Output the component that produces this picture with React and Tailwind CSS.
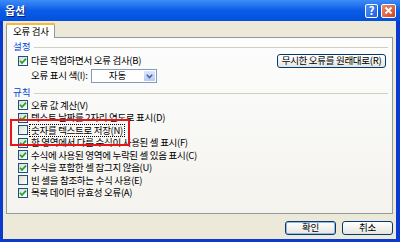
import React from "react";

const font = { fontFamily: '"Noto Sans CJK KR", "Noto Sans", sans-serif' };

function Check({ on }) {
  return (
    <span className="w-[10px] h-[10px] border border-[#1c5180] bg-linear-to-br from-[#dcdcd5] to-white flex items-center justify-center shrink-0">
      {on && (
        <svg width="8" height="8" viewBox="0 0 8 8">
          <path d="M1 3.8 L3 6 L7 1.6" stroke="#21a121" strokeWidth="1.7" fill="none" />
        </svg>
      )}
    </span>
  );
}

function Header({ children }) {
  return (
    <div className="flex items-center h-[12px] pl-[6px] pr-[4px]">
      <span className="text-[#0046d5] text-[9.5px] leading-none">{children}</span>
      <span className="flex-1 h-px bg-[#d0d0bf] ml-[4px]" />
    </div>
  );
}

function Rule({ on, children, focus }) {
  return (
    <div className="flex items-center h-[12.5px] pl-[11px] gap-[2px]">
      <Check on={on} />
      <span
        className={
          "text-[9.5px] leading-none tracking-[-0.3px] text-black px-px py-[1px] " +
          (focus ? "outline outline-1 outline-dotted outline-black" : "")
        }
      >
        {children}
      </span>
    </div>
  );
}

function XpButton({ children, def, className }) {
  return (
    <div
      className={
        "h-[14px] rounded-[3px] border border-[#003c74] bg-linear-to-b from-white to-[#e6e5de] flex items-center justify-center text-[9.5px] leading-none tracking-[-0.3px] text-black " +
        (def ? "shadow-[inset_0_0_0_1px_#9ab5e8] " : "") +
        className
      }
    >
      {children}
    </div>
  );
}

export default function App() {
  const rules = [
    [true, "오류 값 계산(V)"],
    [true, "텍스트 날짜를 2자리 연도로 표시(D)"],
    [false, "숫자를 텍스트로 저장(N)", true],
    [true, "한 영역에서 다른 수식이 사용된 셀 표시(F)"],
    [true, "수식에 사용된 영역에 누락된 셀 있음 표시(C)"],
    [true, "수식을 포함한 셀 잠그지 않음(U)"],
    [false, "빈 셀을 참조하는 수식 사용(E)"],
    [true, "목록 데이터 유효성 오류(A)"],
  ];

  return (
    <div className="w-[400px] h-[242px] bg-[#0a3ad0] flex flex-col relative overflow-hidden" style={font}>
      {/* title bar */}
      <div className="h-[21px] bg-linear-to-b from-[#3d8cf6] via-[#0a5ce8] to-[#0450dc] flex items-center pl-[5px] pr-[4px] shrink-0">
        <span className="text-white font-bold text-[11px] leading-none [text-shadow:1px_1px_0_#0a1f7a]">옵션</span>
        <div className="ml-auto flex gap-[3px]">
          <div className="w-[13px] h-[14px] rounded-[2px] border border-white bg-linear-to-br from-[#4f8ff7] to-[#1f5fe0] flex items-center justify-center text-white text-[11px] font-bold leading-none">
            ?
          </div>
          <div className="w-[15px] h-[14px] rounded-[2px] border border-white bg-linear-to-br from-[#e98a6c] to-[#d3421c] flex items-center justify-center">
            <svg width="9" height="9" viewBox="0 0 9 9">
              <path d="M1.5 1.5 L7.5 7.5 M7.5 1.5 L1.5 7.5" stroke="white" strokeWidth="1.8" />
            </svg>
          </div>
        </div>
      </div>

      {/* body */}
      <div className="flex-1 bg-[#ece9d8] ml-[3px] mr-[4px] mb-[3px] flex flex-col">
        {/* tab */}
        <div className="pt-[2px] pl-[3px] flex">
          <div className="relative z-10 -mb-px w-[49px] h-[15px] bg-white border border-[#919b9c] border-b-0 border-t-0 rounded-t-[2px] flex flex-col">
            <div className="h-[2px] bg-[#f7b83b] rounded-t-[2px] -mx-px" />
            <div className="flex-1 flex items-center pl-[6px] text-[9.5px] leading-none tracking-[-0.3px] text-black">
              오류 검사
            </div>
          </div>
        </div>

        {/* panel */}
        <div className="mx-[3px] h-[177px] border border-[#919b9c] bg-linear-to-b from-[#fdfdfd] to-[#f4f3ee] flex flex-col pt-[3px]">
          <Header>설정</Header>
          <div className="flex items-center h-[14px] mt-px pl-[11px] pr-[6px] gap-[2px]">
            <Check on />
            <span className="text-[9.5px] leading-none tracking-[-0.3px] px-px">다른 작업하면서 오류 검사(B)</span>
            <XpButton className="ml-auto w-[109px] h-[13px]">무시한 오류를 원래대로(R)</XpButton>
          </div>
          <div className="flex items-center h-[14px] mt-px pl-[24px]">
            <span className="text-[9.5px] leading-none tracking-[-0.3px] w-[60px]">오류 표시 색(I):</span>
            <div className="w-[66px] h-[14px] border border-[#7f9db9] bg-white flex">
              <span className="flex-1 flex items-center justify-center text-[9.5px] leading-none">자동</span>
              <span className="w-[11px] m-px rounded-[1px] bg-linear-to-b from-[#dbe6fd] to-[#b3c9f7] flex items-center justify-center">
                <svg width="7" height="5" viewBox="0 0 7 5">
                  <path d="M0.8 0.8 L3.5 3.6 L6.2 0.8" stroke="#4d6185" strokeWidth="1.5" fill="none" />
                </svg>
              </span>
            </div>
          </div>
          <div className="mt-[4px]">
            <Header>규칙</Header>
          </div>
          <div className="flex flex-col">
            {rules.map(([on, text, focus]) => (
              <Rule key={text} on={on} focus={focus}>
                {text}
              </Rule>
            ))}
          </div>
        </div>

        {/* bottom buttons */}
        <div className="flex justify-end gap-[6px] mt-[7px] mr-[3px]">
          <XpButton def className="w-[51px]">확인</XpButton>
          <XpButton className="w-[51px]">취소</XpButton>
        </div>
      </div>

      {/* red highlight annotation */}
      <div className="absolute left-[10px] top-[119px] w-[120px] h-[27px] border-[2px] border-[#e8141c]" />
    </div>
  );
}
